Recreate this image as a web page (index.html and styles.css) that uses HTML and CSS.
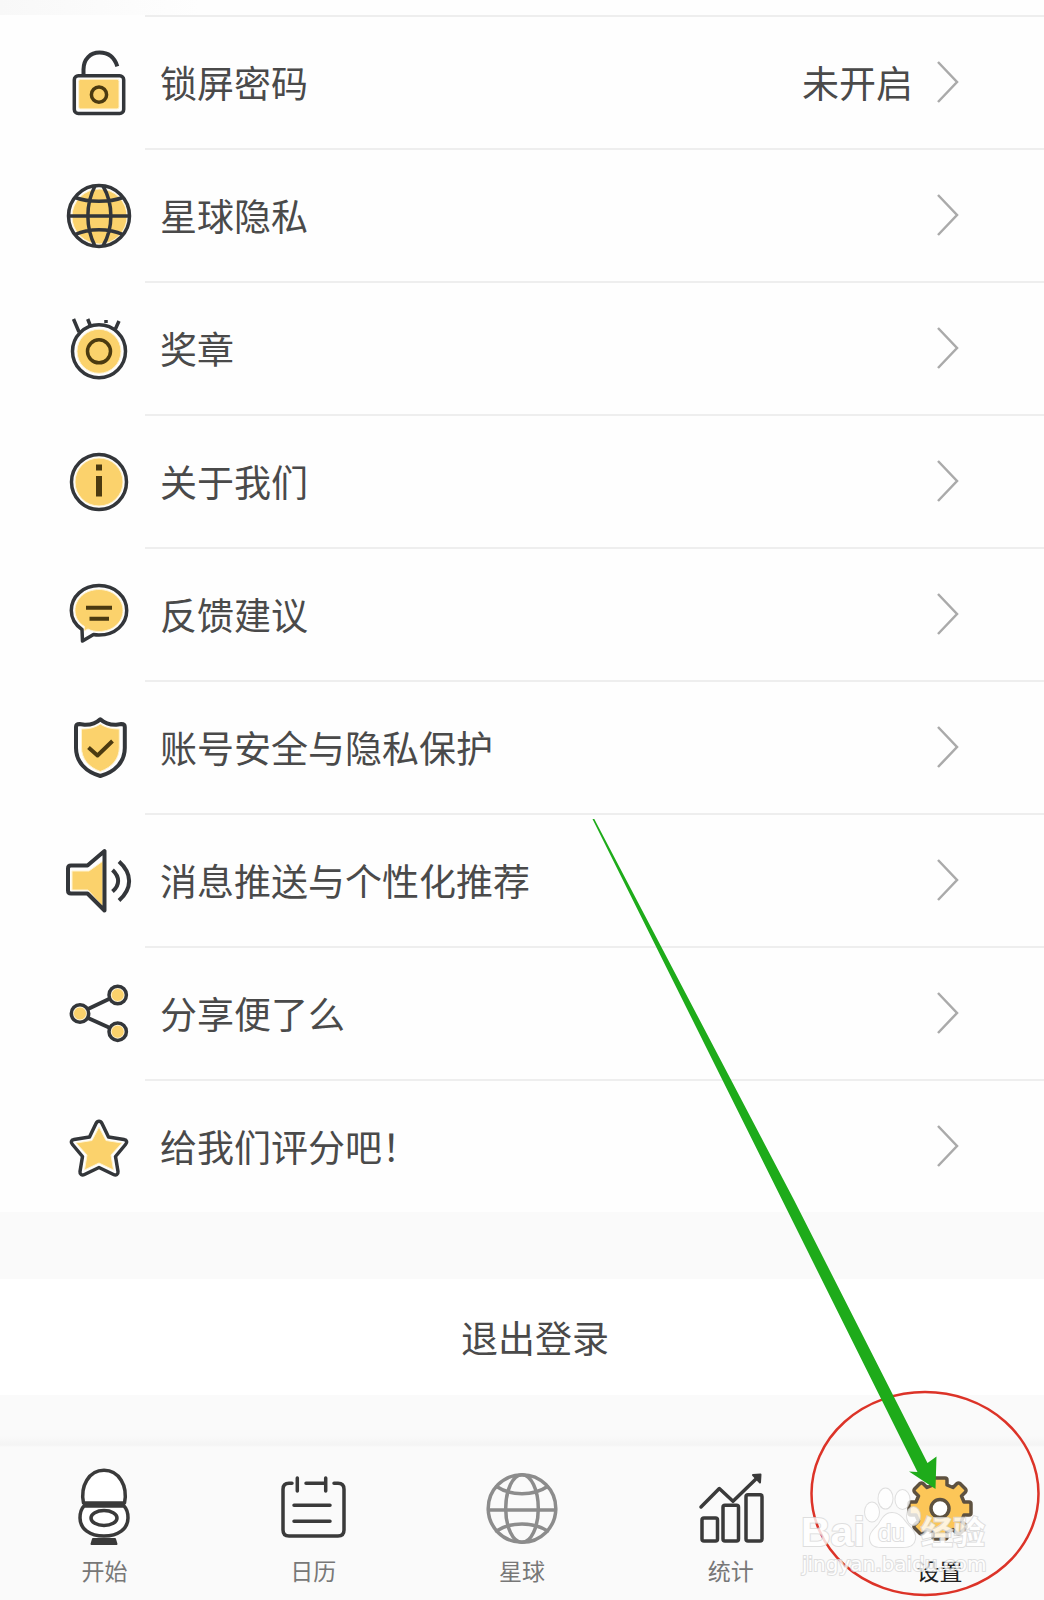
FILE: index.html
```html
<!DOCTYPE html>
<html lang="zh-CN">
<head>
  <meta charset="UTF-8">
  <meta name="viewport" content="width=device-width, initial-scale=1.0">
  <title>设置</title>
  <link rel="stylesheet" href="styles.css">
</head>
<body>
  <div class="page">
    <main class="settings">
      <div class="previous-row"></div>

      <a class="row" href="#lock">
        <span class="row-icon">
          <svg class="icon" viewBox="0 0 66 67">
            <rect class="fill" x="12.7" y="30.3" width="40.3" height="29.6" rx="2"/>
            <rect x="8.3" y="26.8" width="49.4" height="37.6" rx="4"/>
            <circle class="brown" cx="33" cy="45.7" r="7.6"/>
            <path class="thick" d="M17.5 26V20.5C17.5 10 24.5 3.6 33.5 3.6c8.5 0 15 5 17.8 13.7"/>
          </svg>
        </span>
        <span class="row-body">
          <span class="label">锁屏密码</span>
          <span class="value">未开启</span>
          <svg class="chevron" viewBox="0 0 22 42"><path d="M1 1l19 20L1 41"/></svg>
        </span>
      </a>

      <a class="row" href="#planet-privacy">
        <span class="row-icon">
          <svg class="icon" viewBox="0 0 66 67">
            <circle class="fill" cx="33.5" cy="34.5" r="27.5"/>
            <circle cx="33" cy="34" r="30.5"/>
            <path d="M2.5 34h61M29 4C19.5 22 19.5 46 29 64M37 4c10.5 18 10.5 42 0 60M9 15.5c14 5 34 5 48 0M9 52.5c14-6.5 34-6.5 48 0"/>
          </svg>
        </span>
        <span class="row-body">
          <span class="label">星球隐私</span>
          <svg class="chevron" viewBox="0 0 22 42"><path d="M1 1l19 20L1 41"/></svg>
        </span>
      </a>

      <a class="row" href="#medals">
        <span class="row-icon">
          <svg class="icon" viewBox="0 0 66 67">
            <circle class="fill" cx="33" cy="36.3" r="22"/>
            <circle cx="33" cy="36.3" r="26.5"/>
            <circle class="brown" cx="33" cy="36.3" r="11.5"/>
            <path d="M7.5 4L13 17M21.7 4l2.800 7M40 5v3M53 6l-4.500 10"/>
          </svg>
        </span>
        <span class="row-body">
          <span class="label">奖章</span>
          <svg class="chevron" viewBox="0 0 22 42"><path d="M1 1l19 20L1 41"/></svg>
        </span>
      </a>

      <a class="row" href="#about">
        <span class="row-icon">
          <svg class="icon" viewBox="0 0 66 67">
            <circle class="fill" cx="33" cy="34" r="24"/>
            <circle cx="33" cy="34" r="27.5"/>
            <path class="solid" d="M30 16.5h6v6h-6zM30 28h6v20.500h-6z"/>
          </svg>
        </span>
        <span class="row-body">
          <span class="label">关于我们</span>
          <svg class="chevron" viewBox="0 0 22 42"><path d="M1 1l19 20L1 41"/></svg>
        </span>
      </a>

      <a class="row" href="#feedback">
        <span class="row-icon">
          <svg class="icon" viewBox="0 0 66 67">
            <path class="fill" d="M33 8.5c14 0 24 9.500 24 21S47 50.500 33 50.500c-4 0-8-.8-11-2.500l-4 2 .5-4.500C12.500 42 9 36 9 29.500 9 18 19 8.500 33 8.500z"/>
            <path d="M33 4.600c16 0 27.700 11 27.700 24.900S49 54 33 54c-2 0-4-.2-5.500-.5L16.500 60l-.5-11.500C9.500 44 5.300 37.500 5.300 29.500 5.300 15.600 17 4.600 33 4.600z"/>
            <path class="brown thick" d="M20 26.700h26M23.500 37.700h19.500"/>
          </svg>
        </span>
        <span class="row-body">
          <span class="label">反馈建议</span>
          <svg class="chevron" viewBox="0 0 22 42"><path d="M1 1l19 20L1 41"/></svg>
        </span>
      </a>

      <a class="row" href="#security">
        <span class="row-icon">
          <svg class="icon" viewBox="0 0 66 67">
            <path class="fill" d="M34.300 10c5 3.500 11 5 19 5v18c0 12-7 20-19 24.500C22.500 53 15.500 45 15.500 33V15c8 0 14-1.500 18.800-5z"/>
            <path class="thick" d="M34.300 5.300c4 3.700 10 5.700 16 5.500l5-.8c2 0 3.500 1 3.500 3V34c0 14-10 24-24.500 28C20 58 10 48 10 34V13c0-2 1.500-3 3.500-3l5 .8c6 .2 12-1.800 15.800-5.500z"/>
            <path class="brown thick" d="M22.500 33.500l9 8L46.500 27"/>
          </svg>
        </span>
        <span class="row-body">
          <span class="label">账号安全与隐私保护</span>
          <svg class="chevron" viewBox="0 0 22 42"><path d="M1 1l19 20L1 41"/></svg>
        </span>
      </a>

      <a class="row" href="#notifications">
        <span class="row-icon">
          <svg class="icon" viewBox="0 0 66 67">
            <path class="fill" d="M6 24h17l14-10v46L22 43H6z"/>
            <path class="thick" d="M5 18.500h16.500L38.500 4v59.500l-17-17H5c-2 0-3-1-3-3v-22c0-2 1-3 3-3z"/>
            <path class="thick" d="M46.500 23c7.500 7 7.500 15 0 21.500M53 14.500c13.500 12 13.500 27 0 39"/>
          </svg>
        </span>
        <span class="row-body">
          <span class="label">消息推送与个性化推荐</span>
          <svg class="chevron" viewBox="0 0 22 42"><path d="M1 1l19 20L1 41"/></svg>
        </span>
      </a>

      <a class="row" href="#share">
        <span class="row-icon">
          <svg class="icon" viewBox="0 0 66 67">
            <path class="thick" d="M22 29l21-10M22 38l21 9.500"/>
            <circle class="fill" cx="14" cy="33.500" r="6.500"/>
            <circle class="fill" cx="51.700" cy="15" r="6.500"/>
            <circle class="fill" cx="51.700" cy="51.700" r="6.500"/>
            <circle cx="14" cy="33.500" r="8.700"/>
            <circle cx="51.700" cy="15" r="8.700"/>
            <circle cx="51.700" cy="51.700" r="8.700"/>
          </svg>
        </span>
        <span class="row-body">
          <span class="label">分享便了么</span>
          <svg class="chevron" viewBox="0 0 22 42"><path d="M1 1l19 20L1 41"/></svg>
        </span>
      </a>

      <a class="row" href="#rate">
        <span class="row-icon">
          <svg class="icon" viewBox="0 0 66 67">
            <path class="fill" d="M33 14l7 13.500L56 30 45 42l2.500 15L33 50 18.500 57 21 42 10 30l16-2.500z"/>
            <path d="M30 10.500c1.500-3 4.500-3 6 0L42.500 24l15.500 2.500c3 .5 3.500 3 1.500 5L49.500 43.500 52 58.500c.3 3-2 4.300-4.500 3L33 54.500l-14.500 7c-2.500 1.300-4.800 0-4.500-3l2.500-15L6.500 31.500c-2-2-1.500-4.500 1.500-5L23.500 24z"/>
          </svg>
        </span>
        <span class="row-body">
          <span class="label">给我们评分吧！</span>
          <svg class="chevron" viewBox="0 0 22 42"><path d="M1 1l19 20L1 41"/></svg>
        </span>
      </a>
    </main>

    <button class="logout" type="button">退出登录</button>

    <nav class="tabbar">
      <a class="tab" href="#start">
        <svg class="tab-icon" viewBox="0 0 72 80">
          <path fill="#fff" d="M15.500 37C12 20 21 4.300 36 4.300S60 20 56.500 37z"/>
          <path fill="#fff" d="M16 40h40c3 3 4 7 4 12 0 11-10 18-24 18s-24-7-24-18c0-5 1-9 4-12z"/>
          <path class="bar" d="M15 38.500h42"/>
          <ellipse cx="36" cy="52" rx="13" ry="7.500"/>
          <path class="dark" d="M25 73h22l1.500 5h-25z"/>
        </svg>
        <span>开始</span>
      </a>
      <a class="tab" href="#calendar">
        <svg class="tab-icon" viewBox="0 0 72 80">
          <path d="M15 17.300h-3c-4 0-6 2-6 6V64c0 4 2 6 6 6h49c4 0 6-2 6-6V23.300c0-4-2-6-6-6h-4M29 17.300h19M20.300 12v13M48.700 12v13M17 39.300h36M17 55.300h36"/>
        </svg>
        <span>日历</span>
      </a>
      <a class="tab" href="#planet">
        <svg class="tab-icon muted" viewBox="0 0 72 80">
          <circle cx="36" cy="42.500" r="33.800"/>
          <path d="M2.500 44h67"/>
          <ellipse cx="36" cy="42.500" rx="16.300" ry="33.800"/>
          <path d="M10.500 20.500c14 9.500 37 9.500 51 0M10.500 65c14-9.500 37-9.500 51 0"/>
        </svg>
        <span>星球</span>
      </a>
      <a class="tab" href="#stats">
        <svg class="tab-icon" viewBox="0 0 72 80">
          <rect x="7" y="52" width="15.500" height="23" rx="2"/>
          <rect x="28" y="39.300" width="15.500" height="35.700" rx="2"/>
          <rect x="51" y="28.700" width="16" height="46.300" rx="2"/>
          <path d="M6 41l18.300-18.500L38 35.300 62 12"/>
          <path class="dark" d="M58 9l7.500-.5-.5 8z"/>
        </svg>
        <span>统计</span>
      </a>
      <a class="tab active" href="#settings">
        <svg class="tab-icon gear" viewBox="0 0 72 80">
          <path d="M31 12h10q2 0 2 2v5l6 2.500 4-4q1.500-1 3 0l5.500 5.500q1 1.500 0 3l-4 4L60 36h5q2 0 2 2v9q0 2-2 2h-5l-2.500 6 4 4q1 1.500 0 3L56 67.500q-1.500 1-3 0l-4-4L43 66v5q0 2-2 2H31q-2 0-2-2v-5l-6-2.500-4 4q-1.500 1-3 0L10.500 62q-1-1.500 0-3l4-4L12 49H7q-2 0-2-2v-9q0-2 2-2h5l2.500-6-4-4q-1-1.500 0-3l5.500-5.500q1.500-1 3 0l4 4L29 19v-5q0-2 2-2z"/>
          <circle cx="36" cy="42.500" r="9"/>
        </svg>
        <span>设置</span>
      </a>
    </nav>

    <!-- hint pointing at the settings tab -->
    <svg class="hint" viewBox="574 800 470 800">
      <ellipse class="ring" cx="925" cy="1493.500" rx="113.500" ry="101.500"/>
      <path class="arrow" d="M592.500 819h1.800L794 1200l133.500 263 9-6.500-1 32.500-26.500-17.500 8.500.5z"/>
      <g class="watermark">
        <text class="wm-brand" x="801" y="1546">Bai</text>
        <ellipse cx="872" cy="1512" rx="7" ry="9.500"/>
        <ellipse cx="885.500" cy="1498.500" rx="7" ry="10"/>
        <ellipse cx="902.500" cy="1499.500" rx="7" ry="9.500"/>
        <ellipse cx="913.500" cy="1516" rx="6.500" ry="9"/>
        <path d="M892 1513c8 0 11 6 15 11 5 5 9 9 8 15-1 7-7 8-12 8h-22c-6 0-11-2-11-9 0-6 5-9 9-14 3-5 6-11 13-11z"/>
        <text class="wm-du" x="878" y="1541">du</text>
        <text class="wm-cn" x="921" y="1544">经验</text>
        <text class="wm-url" x="802" y="1571">jingyan.baidu.com</text>
      </g>
    </svg>
  </div>
</body>
</html>
```
FILE: styles.css
```css
* {
  box-sizing: border-box;
}
body {
  margin: 0;
  font-family: 'Noto Sans CJK SC', 'Noto Sans', sans-serif;
  background: #fafafa;
  color: #4a4a4a;
}
a {
  color: inherit;
  text-decoration: none;
}
.page {
  position: relative;
  display: flex;
  flex-direction: column;
  min-height: 100vh;
}

/* settings list */
.settings {
  background: #fefefe;
  margin-bottom: 67px;
}
.previous-row {
  height: 15px;
  background: linear-gradient(to right, #f8f8f8, #fefefe 200px);
}
.row {
  display: flex;
  height: 133px;
}
.row-icon {
  width: 145px;
  padding-top: 2px;
  padding-left: 66px;
  display: flex;
  align-items: center;
}
.icon {
  width: 66px;
  height: 67px;
  fill: none;
  stroke: #33363a;
  stroke-width: 3.5;
  stroke-linejoin: round;
}
.icon .fill {
  fill: #fbd26c;
  stroke: #fff3cf;
  stroke-width: 1;
}
.icon .brown {
  stroke: #4b3a10;
}
.icon .thick {
  stroke-width: 4;
}
.icon .solid {
  fill: #4b3a10;
  stroke: none;
}
.row-body {
  flex: 1;
  display: flex;
  align-items: center;
  gap: 24px;
  padding: 0 85px 2px 15px;
  border-top: 2px solid #eee;
  font-size: 37px;
  line-height: 54px;
}
.label {
  flex: 1;
}
.chevron {
  width: 22px;
  height: 42px;
  fill: none;
  stroke: #aaa;
  stroke-width: 2.5;
}

.logout {
  height: 116px;
  margin-bottom: 41px;
  padding: 0 0 0 26px;
  border: 0;
  background: #fff;
  color: #4a4a4a;
  font-family: inherit;
  font-size: 37px;
  line-height: 54px;
}

/* bottom tabs */
.tabbar {
  flex: 1;
  display: flex;
  padding-top: 30px;
  background: linear-gradient(#fafafa, #f4f4f4 9px, #fafafa 11px);
}
.tab {
  flex: 1;
  display: flex;
  flex-direction: column;
  align-items: center;
  gap: 7px;
  font-size: 23px;
  line-height: 34px;
  color: #777;
}
.tab.active {
  color: #222;
}
.tab-icon {
  width: 72px;
  height: 80px;
  fill: none;
  stroke: #3a3a3a;
  stroke-width: 3.5;
  stroke-linecap: round;
  stroke-linejoin: round;
}
.tab-icon.muted {
  stroke: #8c8c8c;
}
.tab-icon .bar {
  stroke-width: 5;
  stroke-linecap: butt;
}
.tab-icon .dark {
  fill: #3a3a3a;
  stroke-width: 2;
}
.gear {
  stroke: #5d5140;
}
.gear path {
  fill: #fcc658;
}
.gear circle {
  fill: #fff;
}

/* arrow, ring and watermark lie over the page */
.hint {
  position: absolute;
  right: 0;
  bottom: 0;
  width: 470px;
  height: 800px;
  pointer-events: none;
}
.ring {
  fill: none;
  stroke: #dc3328;
  stroke-width: 2.5;
}
.arrow {
  fill: #1eab1a;
}
.watermark {
  fill: #fff;
  stroke: #d8d8d8;
  stroke-width: 2;
  paint-order: stroke;
  opacity: 0.8;
  font-family: 'Liberation Sans', 'Noto Sans CJK SC', sans-serif;
}
.wm-brand {
  font-size: 41px;
  font-weight: bold;
}
.wm-du {
  font-size: 24px;
}
.wm-cn {
  font-size: 32px;
  font-weight: bold;
}
.wm-url {
  font-family: 'DejaVu Sans', sans-serif;
  font-size: 20px;
}
```
